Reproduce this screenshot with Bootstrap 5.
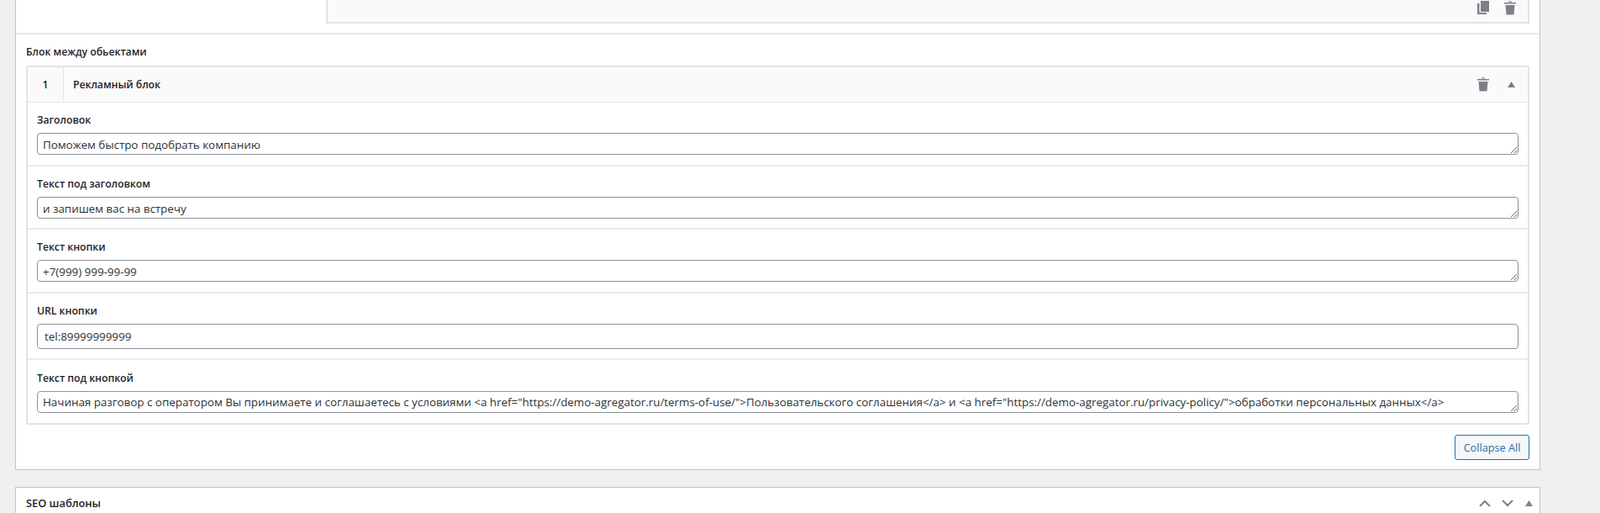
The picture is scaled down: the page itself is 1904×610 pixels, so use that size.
<!DOCTYPE html>
<html lang="ru">
<head>
<meta charset="utf-8">
<title>Блок между обьектами</title>
<link href="https://cdn.jsdelivr.net/npm/bootstrap@5.3.0/dist/css/bootstrap.min.css" rel="stylesheet">
<style>
html,body{height:610px;overflow:hidden}
body{background:#f0f0f1;font-family:"Open Sans","Noto Sans",sans-serif;font-size:13px;line-height:20px;color:#1d2327;padding-left:18px}
.wp-panel{width:1815px;background:#fff;border:1px solid #c3c4c7;border-top:0;height:559px}
.wp-top{height:41px;border-bottom:2px solid #e9e9e9;padding:0 12px 0 369px}
.wp-topblock{height:28px;background:#fafafa;border:2px solid #e4e4e4;border-width:0 2px 2px 2px;padding-right:14px;gap:18px}
.wp-body{padding:0 12px}
.wp-title{font-weight:600;font-size:12.2px;padding-top:11px;height:37px;line-height:20px}
.wp-rep{border:2px solid #e4e4e4;height:427px}
.wp-rephead{height:42px;background:#fafafa;border-bottom:1px solid #e4e4e4}
.wp-idx{width:43px;border-right:1px solid #e4e4e4;font-weight:600;font-size:12.2px;text-align:center;line-height:42px}
.wp-name{font-weight:600;font-size:12.2px;padding-left:11px;line-height:42px}
.wp-tools{padding-right:15px;gap:22px}
.wp-row{padding:11px 11px 0 11px;border-bottom:2px solid #e9e9f0}
.wp-row:last-child{border-bottom:0;padding-top:12px}
.wp-row label{display:block;font-weight:600;font-size:12.2px;line-height:20px;margin:0 0 5px}
.wp-field.form-control{display:block;width:1763px;min-height:0;border:1px solid #8c8f94;border-radius:4px;color:#2c3338;background:#fff;font-size:13.38px;line-height:20px;padding:3px 6px 1px;height:26px;box-shadow:none;overflow:hidden;white-space:nowrap;resize:vertical}
.wp-row:last-child .wp-field.form-control{padding:2px 6px}
input.wp-field.form-control{height:30px;padding:0 8px}
.wp-h1{height:76px}.wp-h2{height:75px}.wp-h3{height:76px}.wp-h4{height:79px}
.wp-foot{padding-top:12px}
.wp-btn.btn{width:89px;height:30px;padding:0;font-size:12.7px;line-height:28px;color:#2271b1;background:#f6f7f7;border:1px solid #2271b1;border-radius:3px}
.wp-panel2{width:1815px;margin-top:20px;background:#fff;border:1px solid #c3c4c7;height:60px;padding:0 8px 0 12px}
.wp-panel2 h2{font-size:12.8px;font-weight:600;margin:0;line-height:36px;color:#1d2327}
.wp-ico{fill:#7c8086;flex:none}
.wp-chev{fill:none;stroke:#7c8086;stroke-width:2;flex:none}
.wp-ctrls{gap:13px;height:36px}
.wp-tri{margin-left:1px}
.wp-drop{margin-top:1px}
</style>
</head>
<body>
<div class="wp-panel">
  <div class="wp-top">
    <div class="wp-topblock d-flex justify-content-end align-items-start">
      <svg class="wp-ico" width="14" height="17" viewBox="0 0 14 17"><path d="M4 1h10v13H4zM0 4h2.500v11H11v2H0z"/></svg>
      <svg class="wp-ico wp-drop" width="14" height="17" viewBox="0 0 14 17"><path d="M5 2a2 2 0 0 1 4 0h5v1.500H0V2zM6 2h2a1 1 0 0 0-2 0zM1.500 5h11l-1 11.500h-9z"/></svg>
    </div>
  </div>
  <div class="wp-body">
    <div class="wp-title">Блок между обьектами</div>
    <div class="wp-rep">
      <div class="wp-rephead d-flex">
        <div class="wp-idx">1</div>
        <div class="wp-name flex-grow-1">Рекламный блок</div>
        <div class="wp-tools d-flex align-items-center">
          <svg class="wp-ico" width="14" height="17" viewBox="0 0 14 17"><path d="M5 2a2 2 0 0 1 4 0h5v1.500H0V2zM6 2h2a1 1 0 0 0-2 0zM1.500 5h11l-1 11.500h-9z"/></svg>
          <svg class="wp-ico" width="9" height="7" viewBox="0 0 9 7"><path d="M4.500 0 9 7H0z"/></svg>
        </div>
      </div>
      <div class="wp-row wp-h1"><label>Заголовок</label><textarea class="form-control wp-field" rows="1">Поможем быстро подобрать компанию</textarea></div>
      <div class="wp-row wp-h2"><label>Текст под заголовком</label><textarea class="form-control wp-field" rows="1">и запишем вас на встречу</textarea></div>
      <div class="wp-row wp-h3"><label>Текст кнопки</label><textarea class="form-control wp-field" rows="1">+7(999) 999-99-99</textarea></div>
      <div class="wp-row wp-h4"><label>URL кнопки</label><input class="form-control wp-field" type="text" value="tel:89999999999"></div>
      <div class="wp-row"><label>Текст под кнопкой</label><textarea class="form-control wp-field" rows="1">Начиная разговор с оператором Вы принимаете и соглашаетесь с условиями &lt;a href="https://demo-agregator.ru/terms-of-use/"&gt;Пользовательского соглашения&lt;/a&gt; и &lt;a href="https://demo-agregator.ru/privacy-policy/"&gt;обработки персональных данных&lt;/a&gt;</textarea></div>
    </div>
    <div class="wp-foot d-flex justify-content-end"><button class="btn wp-btn" type="button">Collapse All</button></div>
  </div>
</div>
<div class="wp-panel2 d-flex justify-content-between align-items-start">
  <h2>SEO шаблоны</h2>
  <div class="wp-ctrls d-flex align-items-center">
    <svg class="wp-chev" width="14" height="9" viewBox="0 0 14 9"><path d="M1 8 7 2l6 6"/></svg>
    <svg class="wp-chev" width="14" height="9" viewBox="0 0 14 9"><path d="M1 1l6 6 6-6"/></svg>
    <svg class="wp-ico wp-tri" width="9" height="7" viewBox="0 0 9 7"><path d="M4.500 0 9 7H0z"/></svg>
  </div>
</div>
</body>
</html>
